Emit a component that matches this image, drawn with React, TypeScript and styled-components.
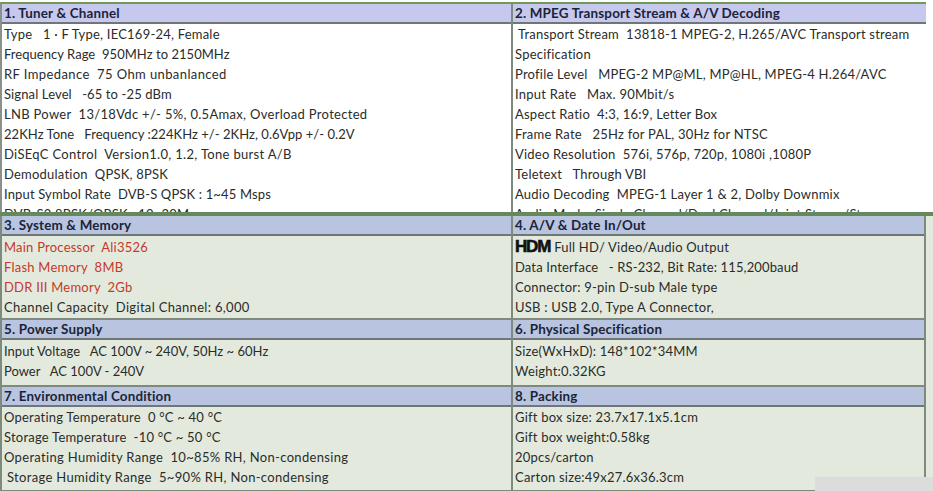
import React from "react";
import styled, { createGlobalStyle } from "styled-components";

const Global = createGlobalStyle`
	html, body {
		margin: 0;
		padding: 0;
		background: #fff;
	}
`;

const Page = styled.div`
	position: relative;
	width: 933px;
	height: 491px;
	overflow: hidden;
	padding-top: 2px;
	box-sizing: border-box;
	font-family: "Lato", "Liberation Sans", sans-serif;
	font-size: 13px;
	color: #2a2c2a;
`;

const TopPanel = styled.section`
	width: 926px;
	height: 210px;
	overflow: hidden;
	box-sizing: border-box;
	border-top: 2px solid #6f9a58;
	border-left: 2px solid #8a908a;
	background: #fff;
`;

const Divider = styled.div`
	height: 4px;
	background: #65895a;
`;

const BottomPanel = styled.section`
	height: 275px;
	background: #e3eadd;
`;

const Grid = styled.div`
	width: 926px;
	box-sizing: border-box;
	display: grid;
	grid-template-columns: 509px 1fr;
	border-right: 2px solid #7f8a7f;
`;

const BottomGrid = styled(Grid)`
	border-left: 2px solid #7f8a7f;
	border-bottom: 2px solid #7f8a7f;
`;

const Cell = styled.div<{ $right?: boolean }>`
	min-width: 0;
	border-left: ${(p) => (p.$right ? "2px solid #7f8a7f" : "none")};
`;

const Head = styled.h2<{ $tone: "lilac" | "blue" }>`
	margin: 0;
	height: 18px;
	padding-left: 2px;
	background: ${(p) => (p.$tone === "lilac" ? "#c6c8ee" : "#b8c4e0")};
	border-bottom: 2px solid #6e7676;
	font-size: 13.4px;
	font-weight: 700;
	line-height: 18px;
	letter-spacing: 0.18px;
	color: #1a2438;
`;

const SpacedHead = styled(Head)`
	border-top: 2px solid #7f8a7f;
`;

const Rows = styled.div<{ $top: number; $bottom: number }>`
	padding: ${(p) => p.$top}px 0 ${(p) => p.$bottom}px 2px;
`;

const Row = styled.div<{ $alert?: boolean; $indent?: boolean; $spacing?: number }>`
	height: 20px;
	line-height: 20px;
	white-space: pre;
	overflow: hidden;
	letter-spacing: ${(p) => p.$spacing ?? 0.22}px;
	padding-left: ${(p) => (p.$indent ? "3px" : "0")};
	color: ${(p) => (p.$alert ? "#c5392a" : "inherit")};
`;

const Hdmi = styled.span`
	font-family: "Liberation Sans", sans-serif;
	font-size: 17px;
	font-weight: 700;
	letter-spacing: -1.2px;
	color: #111;
	-webkit-text-stroke: 0.6px #111;
	margin-right: 4px;
`;

const Patch = styled.div`
	position: absolute;
	right: 0;
	bottom: 0;
	width: 118px;
	height: 14px;
	background: #dcdcdc;
`;

type Line = { text: string; alert?: boolean; indent?: boolean; spacing?: number };

const plain = (...items: string[]): Line[] => items.map((text) => ({ text }));

const tuner: Line[] = [
	{ text: "Type   1 · F Type, IEC169-24, Female" },
	{ text: "Frequency Rage  950MHz to 2150MHz", spacing: 0.04 },
	{ text: "RF Impedance  75 Ohm unbanlanced", spacing: 0.4 },
	{ text: "Signal Level   -65 to -25 dBm", spacing: 0.12 },
	{ text: "LNB Power  13/18Vdc +/- 5%, 0.5Amax, Overload Protected", spacing: 0.31 },
	{ text: "22KHz Tone   Frequency :224KHz +/- 2KHz, 0.6Vpp +/- 0.2V", spacing: 0.04 },
	{ text: "DiSEqC Control  Version1.0, 1.2, Tone burst A/B", spacing: 0.32 },
	{ text: "Demodulation  QPSK, 8PSK" },
	{ text: "Input Symbol Rate  DVB-S QPSK : 1~45 Msps", spacing: 0.15 },
	{ text: "DVB-S2 8PSK/QPSK : 10~30M" },
];

const mpeg: Line[] = [
	{ text: "Transport Stream  13818-1 MPEG-2, H.265/AVC Transport stream", indent: true },
	...plain(
		"Specification",
		"Profile Level   MPEG-2 MP@ML, MP@HL, MPEG-4 H.264/AVC",
		"Input Rate   Max. 90Mbit/s",
		"Aspect Ratio  4:3, 16:9, Letter Box",
		"Frame Rate   25Hz for PAL, 30Hz for NTSC",
		"Video Resolution  576i, 576p, 720p, 1080i ,1080P",
		"Teletext   Through VBI",
		"Audio Decoding  MPEG-1 Layer 1 & 2, Dolby Downmix",
		"Audio Mode  Single Channel/Dual Channel/Joint Stereo/St"
	),
];

const memory: Line[] = [
	{ text: "Main Processor  Ali3526", alert: true },
	{ text: "Flash Memory  8MB", alert: true },
	{ text: "DDR III Memory  2Gb", alert: true },
	{ text: "Channel Capacity  Digital Channel: 6,000", spacing: 0.32 },
];

const av: Line[] = [
	{ text: "Data Interface   - RS-232, Bit Rate: 115,200baud", spacing: 0.14 },
	...plain("Connector: 9-pin D-sub Male type", "USB : USB 2.0, Type A Connector,"),
];

const power: Line[] = [
	{ text: "Input Voltage   AC 100V ~ 240V, 50Hz ~ 60Hz", spacing: 0.02 },
	{ text: "Power   AC 100V - 240V", spacing: 0 },
];

const physical = plain("Size(WxHxD): 148*102*34MM", "Weight:0.32KG");

const environment: Line[] = [
	{ text: "Operating Temperature  0 °C ~ 40 °C" },
	{ text: "Storage Temperature  -10 °C ~ 50 °C" },
	{ text: "Operating Humidity Range  10~85% RH, Non-condensing", spacing: 0.32 },
	{ text: "Storage Humidity Range  5~90% RH, Non-condensing", indent: true, spacing: 0.32 },
];

const packing = plain(
	"Gift box size: 23.7x17.1x5.1cm",
	"Gift box weight:0.58kg",
	"20pcs/carton",
	"Carton size:49x27.6x36.3cm"
);

const renderRows = (lines: Line[]) =>
	lines.map((l) => (
		<Row key={l.text} $alert={l.alert} $indent={l.indent} $spacing={l.spacing}>
			{l.text}
		</Row>
	));

export default function App() {
	return (
		<Page>
			<Global />
			<TopPanel>
				<Grid>
					<Cell>
						<Head $tone="lilac">1. Tuner &amp; Channel</Head>
						<Rows $top={0} $bottom={0}>{renderRows(tuner)}</Rows>
					</Cell>
					<Cell $right>
						<Head $tone="lilac">2. MPEG Transport Stream &amp; A/V Decoding</Head>
						<Rows $top={0} $bottom={0}>{renderRows(mpeg)}</Rows>
					</Cell>
				</Grid>
			</TopPanel>
			<Divider />
			<BottomPanel>
				<BottomGrid>
					<Cell>
						<Head $tone="blue">3. System &amp; Memory</Head>
						<Rows $top={1} $bottom={1}>{renderRows(memory)}</Rows>
					</Cell>
					<Cell $right>
						<Head $tone="blue">4. A/V &amp; Date In/Out</Head>
						<Rows $top={1} $bottom={1}>
							<Row>
								<Hdmi>HDM</Hdmi>Full HD/ Video/Audio Output
							</Row>
							{renderRows(av)}
						</Rows>
					</Cell>
					<Cell>
						<SpacedHead $tone="blue">5. Power Supply</SpacedHead>
						<Rows $top={1} $bottom={4}>{renderRows(power)}</Rows>
					</Cell>
					<Cell $right>
						<SpacedHead $tone="blue">6. Physical Specification</SpacedHead>
						<Rows $top={1} $bottom={4}>{renderRows(physical)}</Rows>
					</Cell>
					<Cell>
						<SpacedHead $tone="blue">7. Environmental Condition</SpacedHead>
						<Rows $top={0} $bottom={3}>{renderRows(environment)}</Rows>
					</Cell>
					<Cell $right>
						<SpacedHead $tone="blue">8. Packing</SpacedHead>
						<Rows $top={0} $bottom={3}>{renderRows(packing)}</Rows>
					</Cell>
				</BottomGrid>
			</BottomPanel>
			<Patch />
		</Page>
	);
}
